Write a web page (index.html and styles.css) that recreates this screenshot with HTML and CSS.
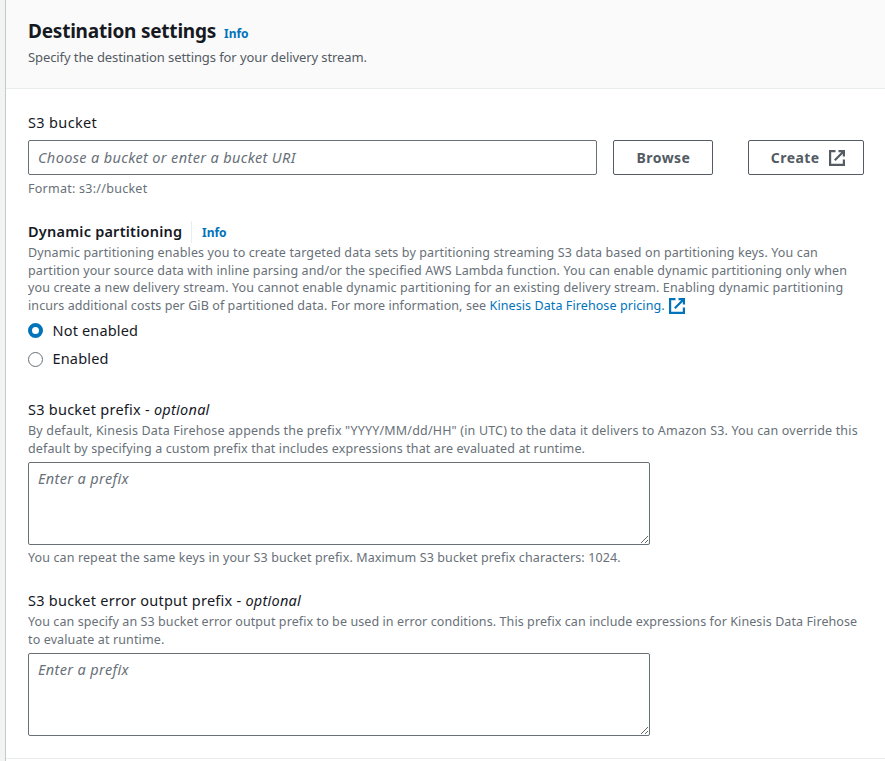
FILE: index.html
```html
<!DOCTYPE html>
<html lang="en">
<head>
<meta charset="utf-8">
<title>Destination settings</title>
<link rel="stylesheet" href="styles.css">
</head>
<body>
<main class="panel">
  <header class="panel-header">
    <h2 class="title"><span class="title-text">Destination settings</span><a class="info">Info</a></h2>
    <p class="subtitle">Specify the destination settings for your delivery stream.</p>
  </header>
  <div class="content">
    <section class="field bucket">
      <label class="label" for="bucket">S3 bucket</label>
      <div class="row">
        <input id="bucket" class="input uri" placeholder="Choose a bucket or enter a bucket URI">
        <button class="button browse">Browse</button>
        <button class="button create"><span>Create</span>
          <svg class="icon" viewBox="0 0 16 16"><path d="M6.5 1.1H1.1v13.8h13.8V9.5M9.5 1.1h5.4v5.4M14.5 1.5 5.8 10.2"/></svg>
        </button>
      </div>
      <p class="desc hint format">Format: s3://bucket</p>
    </section>
    <section class="field dynamic">
      <div class="label strong"><span class="w-dyn">Dynamic partitioning</span><a class="info divided">Info</a></div>
      <p class="desc para">
        <span class="line">Dynamic partitioning enables you to create targeted data sets by partitioning streaming S3 data based on partitioning keys. You can</span>
        <span class="line">partition your source data with inline parsing and/or the specified AWS Lambda function. You can enable dynamic partitioning only when</span>
        <span class="line">you create a new delivery stream. You cannot enable dynamic partitioning for an existing delivery stream. Enabling dynamic partitioning</span>
        <span class="line p4">incurs additional costs per GiB of partitioned data. For more information, see <a class="link">Kinesis Data Firehose pricing.<svg class="icon" viewBox="0 0 16 16"><path d="M6.5 1.1H1.1v13.8h13.8V9.5M9.5 1.1h5.4v5.4M14.5 1.5 5.8 10.2"/></svg></a></span>
      </p>
      <div class="radios">
        <label class="radio"><input type="radio" name="dynamic" checked><span>Not enabled</span></label>
        <label class="radio second"><input type="radio" name="dynamic"><span>Enabled</span></label>
      </div>
    </section>
    <section class="field prefix">
      <label class="label" for="prefix">S3 bucket prefix - <i>optional</i></label>
      <p class="desc para">
        <span class="line q1">By default, Kinesis Data Firehose appends the prefix "YYYY/MM/dd/HH" (in UTC) to the data it delivers to Amazon S3. You can override this</span>
        <span class="line">default by specifying a custom prefix that includes expressions that are evaluated at runtime.</span>
      </p>
      <textarea id="prefix" class="input area" placeholder="Enter a prefix"></textarea>
      <p class="desc hint">You can repeat the same keys in your S3 bucket prefix. Maximum S3 bucket prefix characters: 1024.</p>
    </section>
    <section class="field error">
      <label class="label" for="error">S3 bucket error output prefix - <i>optional</i></label>
      <p class="desc para">
        <span class="line e1">You can specify an S3 bucket error output prefix to be used in error conditions. This prefix can include expressions for Kinesis Data Firehose</span>
        <span class="line">to evaluate at runtime.</span>
      </p>
      <textarea id="error" class="input area" placeholder="Enter a prefix"></textarea>
    </section>
  </div>
</main>
</body>
</html>
```

FILE: styles.css
```css
* { box-sizing: border-box; }
body {
  margin: 0;
  height: 761px;
  overflow: hidden;
  padding-left: 5px;
  background: #f2f3f3;
  color: #16191f;
  font-family: "Noto Sans", sans-serif;
  font-size: 14.5px;
}
p, h2 { margin: 0; }
.panel { height: 761px; border-left: 1px solid #c6c8c8; background: #fff; }
.panel-header {
  height: 89px;
  padding: 19px 22px 0;
  background: #fafafa;
  border-bottom: 1px solid #eaeded;
}
.title { display: flex; align-items: baseline; height: 26px; line-height: 24px; font-size: 19px; }
.title-text { width: 196px; font-weight: 700; letter-spacing: -.22px; white-space: nowrap; }
.info { color: #0073bb; font-size: 12px; font-weight: 700; letter-spacing: 0; }
.subtitle { padding-top: 3px; line-height: 18px; font-size: 13px; letter-spacing: -.09px; color: #545b64; }
.content { height: 670px; padding: 24px 21px 0 22px; border-bottom: 1px solid #eaeded; }
.field { display: flex; flex-direction: column; }
.bucket { height: 108px; }
.dynamic { height: 179px; }
.prefix { height: 191px; }
.label { display: block; height: 19px; line-height: 18px; letter-spacing: .25px; white-space: nowrap; }
.bucket .label { height: 27px; line-height: 19px; letter-spacing: .35px; }
.strong { display: flex; height: 20px; font-weight: 600; line-height: 20px; letter-spacing: .22px; }
.w-dyn { width: 163px; }
.divided { height: 22px; line-height: 24px; padding-left: 10px; border-left: 1px solid #eaeded; }
.row { display: flex; }
.input {
  width: 569px;
  height: 35px;
  margin: 0;
  padding: 0 9px;
  border: 1px solid #687078;
  border-radius: 2px;
  background: #fff;
  font: 14.5px "Noto Sans", sans-serif;
  letter-spacing: .36px;
  outline: 0;
}
.uri { padding-bottom: 2px; }
.input::placeholder { color: #687078; font-style: italic; opacity: 1; }
.area { display: block; width: 622px; height: 83px; padding: 5px 9px; line-height: 20px; resize: both; }
.button {
  display: flex;
  align-items: center;
  justify-content: center;
  height: 35px;
  padding: 0;
  border: 1px solid #545b64;
  border-radius: 2px;
  background: #fff;
  color: #545b64;
  font: 700 14px "Noto Sans", sans-serif;
  letter-spacing: .45px;
}
.browse { width: 100px; margin-left: 16px; padding-left: 1px; }
.create { width: 116px; margin-left: 35px; padding-left: 4px; gap: 9.5px; }
.icon { width: 16px; height: 16px; fill: none; stroke: currentColor; stroke-width: 2.2; }
.desc { font-size: 12.5px; line-height: 17.7px; letter-spacing: .127px; color: #687078; white-space: nowrap; }
.hint { padding-top: 4px; }
.prefix .hint { letter-spacing: .115px; }
.format { padding-top: 5px; letter-spacing: .26px; }
.line { display: block; height: 17.7px; }
.para { height: 43px; padding-top: 3px; }
.dynamic .para { height: 74px; }
.p4 { letter-spacing: .09px; }
.q1 { letter-spacing: .174px; }
.e1 { letter-spacing: .09px; }
.link { color: #0073bb; }
.link .icon { margin-left: 4px; vertical-align: -4px; }
.radios { display: flex; flex-direction: column; gap: 8px; padding-top: 5px; letter-spacing: .17px; }
.radio { display: flex; align-items: center; height: 20px; gap: 9.5px; }
.radio input {
  appearance: none;
  width: 15px;
  height: 15px;
  margin: 0;
  border: 1px solid #687078;
  border-radius: 50%;
  background: #fff;
}
.second input { margin-top: 2px; }
.radio input:checked { border: 4.5px solid #0073bb; }
```
